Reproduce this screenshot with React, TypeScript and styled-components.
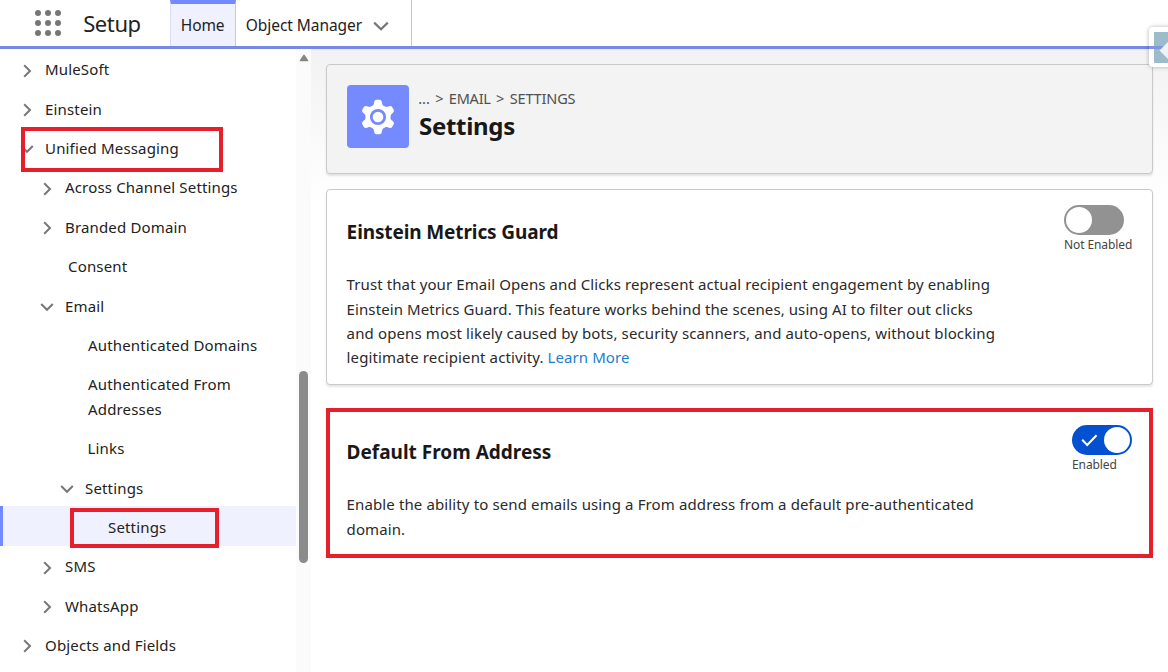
import React from "react";
import styled, { createGlobalStyle, css } from "styled-components";

const GlobalStyle = createGlobalStyle`
  *, *::before, *::after { box-sizing: border-box; }
  html, body { margin: 0; padding: 0; }
  body {
    width: 1168px;
    height: 672px;
    overflow: hidden;
    background: #fff;
    color: #222;
    font-family: "Noto Sans", "Open Sans", sans-serif;
  }
`;

const Page = styled.div`
  position: relative;
  display: flex;
  flex-direction: column;
  width: 1168px;
  height: 672px;
  overflow: hidden;
`;

const Header = styled.header`
  display: flex;
  flex: none;
  height: 49px;
  border-bottom: 3px solid #7789e6;
  background: #fff;
`;

const Launcher = styled.div`
  display: grid;
  grid-template-columns: repeat(3, 6.4px);
  grid-auto-rows: 6.4px;
  gap: 3.6px;
  margin: 9.8px 0 0 34.8px;
`;

const Dot = styled.i`
  border-radius: 50%;
  background: #767676;
`;

const AppName = styled.div`
  width: 86.6px;
  margin-left: 22px;
  font-size: 22px;
  line-height: 47px;
  letter-spacing: -0.4px;
  white-space: nowrap;
`;

const Tab = styled.div<{ $active?: boolean }>`
  display: flex;
  align-items: center;
  gap: 12px;
  padding: 3px 10px 0;
  border-right: 1px solid #c9c9c9;
  font-size: 15.5px;
  line-height: 40px;
  letter-spacing: -0.06px;
  white-space: nowrap;
  ${(p) =>
    p.$active &&
    css`
      width: 66px;
      padding: 0 0 1px 10px;
      border-left: 1px solid #d8dcf5;
      border-top: 4px solid #7589ff;
      background: #eff1fe;
      letter-spacing: -0.1px;
    `}
`;

const ObjectTab = styled(Tab)`
  width: 176px;
`;

const TabChevron = styled.svg`
  margin: 2px 0 0 -1px;
  fill: none;
  stroke: #777;
  stroke-width: 2.2;
`;

const Body = styled.div`
  display: flex;
  flex: 1;
  min-height: 0;
`;

const Sidebar = styled.aside`
  display: flex;
  flex: none;
  width: 311px;
  overflow: hidden;
`;

const Tree = styled.nav`
  flex: none;
  width: 296px;
  margin-top: -0.6px;
`;

const Row = styled.div<{ $indent: number; $active?: boolean }>`
  display: flex;
  align-items: center;
  gap: 10.5px;
  padding: 8.8px 30px 6.2px ${(p) => p.$indent}px;
  font-size: 15px;
  line-height: 24.4px;
  letter-spacing: 0.16px;
  ${(p) =>
    p.$active &&
    css`
      background: #eff1fe;
      box-shadow: inset 3px 0 0 #7589ff;
    `}
`;

const ChevronBox = styled.svg`
  flex: none;
  width: 16px;
  height: 16px;
  margin-top: 2.4px;
  fill: none;
  stroke: #777;
  stroke-width: 2;
`;

const ScrollTrack = styled.div`
  display: flex;
  flex-direction: column;
  align-items: center;
  width: 15px;
  background: #fbfbfb;
`;

const ScrollUp = styled.svg`
  width: 10px;
  height: 8px;
  margin: 5px 0 309px;
  fill: #858585;
  stroke: #858585;
  stroke-width: 1.5;
  stroke-linejoin: round;
`;

const ScrollThumb = styled.div`
  width: 9px;
  height: 192px;
  border-radius: 5px;
  background: #8b8b8b;
`;

const Main = styled.main`
  flex: 1;
  padding: 15px 15px 0;
  background: linear-gradient(#f2f2f2, #fff 155px);
  box-shadow: inset 0 2px 1px -1px #e3e7fb;
`;

const PageHeader = styled.section`
  display: flex;
  gap: 10px;
  height: 110px;
  padding: 20px;
  border: 1px solid #c9c9c9;
  border-radius: 4px;
  background: #f3f3f3;
  box-shadow: 0 2px 2px rgba(0, 0, 0, 0.1);
`;

const Tile = styled.div`
  display: grid;
  place-items: center;
  width: 62px;
  height: 63px;
  border-radius: 4px;
  background: #758aff;
`;

const Crumbs = styled.div`
  display: flex;
  gap: 5.3px;
  height: 26px;
  margin-left: -0.8px;
  font-size: 14.5px;
  line-height: 26.6px;
  color: #505050;
`;

const Crumb = styled.span<{ $spacing?: number }>`
  letter-spacing: ${(p) => p.$spacing ?? 0}px;
`;

const PageTitle = styled.h1`
  margin: 0;
  color: #181818;
  font-size: 24px;
  font-weight: 700;
  line-height: 29px;
  letter-spacing: -0.3px;
`;

const Card = styled.section<{ $marked?: boolean }>`
  display: flex;
  justify-content: space-between;
  height: 196px;
  margin-top: 15px;
  padding: 15px 20px 0;
  border: 1px solid #c9c9c9;
  border-radius: 4px;
  background: #fff;
  box-shadow: 0 2px 2px rgba(0, 0, 0, 0.1);
  ${(p) =>
    p.$marked &&
    css`
      height: 150px;
      margin-top: 23px;
      padding: 13px 17px 0;
      border: 4px solid #e6202a;
      border-radius: 0;
      box-shadow: none;
    `}
`;

const CardText = styled.div`
  padding-top: 15px;
  margin-left: -0.4px;
`;

const CardTitle = styled.h2<{ $spacing: number }>`
  margin: 0 0 28.1px;
  color: #181818;
  font-size: 19px;
  font-weight: 700;
  line-height: 24px;
  letter-spacing: ${(p) => p.$spacing}px;
`;

const Line = styled.p<{ $spacing: number }>`
  margin: 0;
  font-size: 15px;
  line-height: 24.4px;
  letter-spacing: ${(p) => p.$spacing}px;
  white-space: nowrap;
  color: #2a2a2a;
`;

const Link = styled.a`
  color: #1b7ed0;
  letter-spacing: 0.08px;
`;

const ToggleField = styled.div`
  display: flex;
  flex-direction: column;
  align-items: flex-start;
`;

const Switch = styled.div<{ $on?: boolean }>`
  display: flex;
  align-items: center;
  justify-content: space-between;
  width: 60px;
  height: 30px;
  padding: ${(p) => (p.$on ? "0 1.6px 0 9px" : "0 1.5px")};
  border-radius: 15px;
  background: ${(p) => (p.$on ? "#0350d0" : "#929292")};
`;

const Knob = styled.div`
  width: 26px;
  height: 26px;
  border-radius: 50%;
  background: #fff;
`;

const SwitchLabel = styled.div`
  width: 68px;
  font-size: 12px;
  line-height: 19px;
  letter-spacing: -0.1px;
  white-space: nowrap;
  color: #444;
`;

const EnabledField = styled(ToggleField)`
  width: 60px;
`;

const Highlight = styled.div<{ $x: number; $y: number; $w: number; $h: number }>`
  position: absolute;
  left: ${(p) => p.$x}px;
  top: ${(p) => p.$y}px;
  width: ${(p) => p.$w}px;
  height: ${(p) => p.$h}px;
  border: 4px solid #e6202a;
`;

const EdgeTab = styled.div`
  position: absolute;
  top: 27px;
  right: -4px;
  width: 23px;
  height: 40px;
  padding: 5px 0 0 5px;
  border-radius: 4px;
  background: linear-gradient(transparent 19px, #8492ea 19px, #8492ea 22px, transparent 22px), rgba(255, 255, 255, 0.94);
  box-shadow: 0 0 4px rgba(0, 0, 0, 0.3);
`;

function Chevron({ open }: { open: boolean }) {
  return (
    <ChevronBox viewBox="0 0 16 16">
      <path d={open ? "M2.2 5 8 10.8 13.8 5" : "M5.2 2.2 11 8 5.2 13.8"} />
    </ChevronBox>
  );
}

type Item = { label: string; indent: number; open?: boolean; active?: boolean };

const items: Item[] = [
  { label: "MuleSoft", indent: 18.5, open: false },
  { label: "Einstein", indent: 18.5, open: false },
  { label: "Unified Messaging", indent: 18.5, open: true },
  { label: "Across Channel Settings", indent: 38.5, open: false },
  { label: "Branded Domain", indent: 38.5, open: false },
  { label: "Consent", indent: 68 },
  { label: "Email", indent: 38.5, open: true },
  { label: "Authenticated Domains", indent: 88 },
  { label: "Authenticated From Addresses", indent: 88 },
  { label: "Links", indent: 87.5 },
  { label: "Settings", indent: 58.5, open: true },
  { label: "Settings", indent: 108, active: true },
  { label: "SMS", indent: 38.5, open: false },
  { label: "WhatsApp", indent: 38.5, open: false },
  { label: "Objects and Fields", indent: 18.5, open: false },
];

export default function App() {
  return (
    <>
      <GlobalStyle />
      <Page>
        <Header>
          <Launcher>
            {Array.from({ length: 9 }, (_, i) => (
              <Dot key={i} />
            ))}
          </Launcher>
          <AppName>Setup</AppName>
          <Tab $active>Home</Tab>
          <ObjectTab>
            Object Manager
            <TabChevron width="16" height="12" viewBox="0 0 16 12">
              <path d="M1.2 2.6 8 9.2l6.8-6.6" />
            </TabChevron>
          </ObjectTab>
        </Header>
        <Body>
          <Sidebar>
            <Tree>
              {items.map((item, i) => (
                <Row key={i} $indent={item.indent} $active={item.active}>
                  {item.open !== undefined && <Chevron open={item.open} />}
                  {item.label}
                </Row>
              ))}
            </Tree>
            <ScrollTrack>
              <ScrollUp viewBox="0 0 10 8">
                <path d="M5 1.3 8.6 6.6H1.4z" />
              </ScrollUp>
              <ScrollThumb />
            </ScrollTrack>
          </Sidebar>
          <Main>
            <PageHeader>
              <Tile>
                <svg width="36" height="36" viewBox="-18 -18 36 36">
                  <g fill="#fff">
                    <circle r="12.4" />
                    {[0, 60, 120, 180, 240, 300].map((a) => (
                      <path
                        key={a}
                        transform={`rotate(${a})`}
                        d="M-6.4-10.4C-4.6-11.6-4.2-12.4-4-14l.2-1Q-3.6-17.2-1.6-17.2H1.6Q3.6-17.2 3.8-15L4-14C4.2-12.4 4.6-11.6 6.4-10.4z"
                      />
                    ))}
                  </g>
                  <circle r="6.7" fill="#fff" stroke="#758aff" strokeWidth="2.8" />
                </svg>
              </Tile>
              <div>
                <Crumbs>
                  <Crumb>...</Crumb>
                  <Crumb>&gt;</Crumb>
                  <Crumb $spacing={-0.2}>EMAIL</Crumb>
                  <Crumb>&gt;</Crumb>
                  <Crumb $spacing={-0.15}>SETTINGS</Crumb>
                </Crumbs>
                <PageTitle>Settings</PageTitle>
              </div>
            </PageHeader>
            <Card>
              <CardText>
                <CardTitle $spacing={-0.12}>Einstein Metrics Guard</CardTitle>
                <Line $spacing={0.096}>
                  Trust that your Email Opens and Clicks represent actual recipient engagement by enabling
                </Line>
                <Line $spacing={0.088}>
                  Einstein Metrics Guard. This feature works behind the scenes, using AI to filter out clicks
                </Line>
                <Line $spacing={0.128}>
                  and opens most likely caused by bots, security scanners, and auto-opens, without blocking
                </Line>
                <Line $spacing={0.12}>
                  legitimate recipient activity. <Link>Learn More</Link>
                </Line>
              </CardText>
              <ToggleField>
                <Switch>
                  <Knob />
                </Switch>
                <SwitchLabel>Not Enabled</SwitchLabel>
              </ToggleField>
            </Card>
            <Card $marked>
              <CardText>
                <CardTitle $spacing={0}>Default From Address</CardTitle>
                <Line $spacing={0.122}>
                  Enable the ability to send emails using a From address from a default pre-authenticated
                </Line>
                <Line $spacing={0.1}>domain.</Line>
              </CardText>
              <EnabledField>
                <Switch $on>
                  <svg width="18" height="14" viewBox="0 0 18 14" fill="none" stroke="#fff" strokeWidth="2">
                    <path d="M1.2 6.8 6.2 12 15.6 2.2" />
                  </svg>
                  <Knob />
                </Switch>
                <SwitchLabel>Enabled</SwitchLabel>
              </EnabledField>
            </Card>
          </Main>
        </Body>
        <Highlight $x={21} $y={127} $w={202} $h={45} />
        <Highlight $x={70} $y={508} $w={149} $h={40} />
        <EdgeTab>
          <svg width="18" height="31" viewBox="0 0 18 31">
            <rect width="18" height="31" fill="#9dbccb" />
            <path d="M0 14h14v3H0z" fill="#7f98dc" />
            <path d="M14 10v17L5.5 18.5z" fill="#eef3f8" />
          </svg>
        </EdgeTab>
      </Page>
    </>
  );
}
